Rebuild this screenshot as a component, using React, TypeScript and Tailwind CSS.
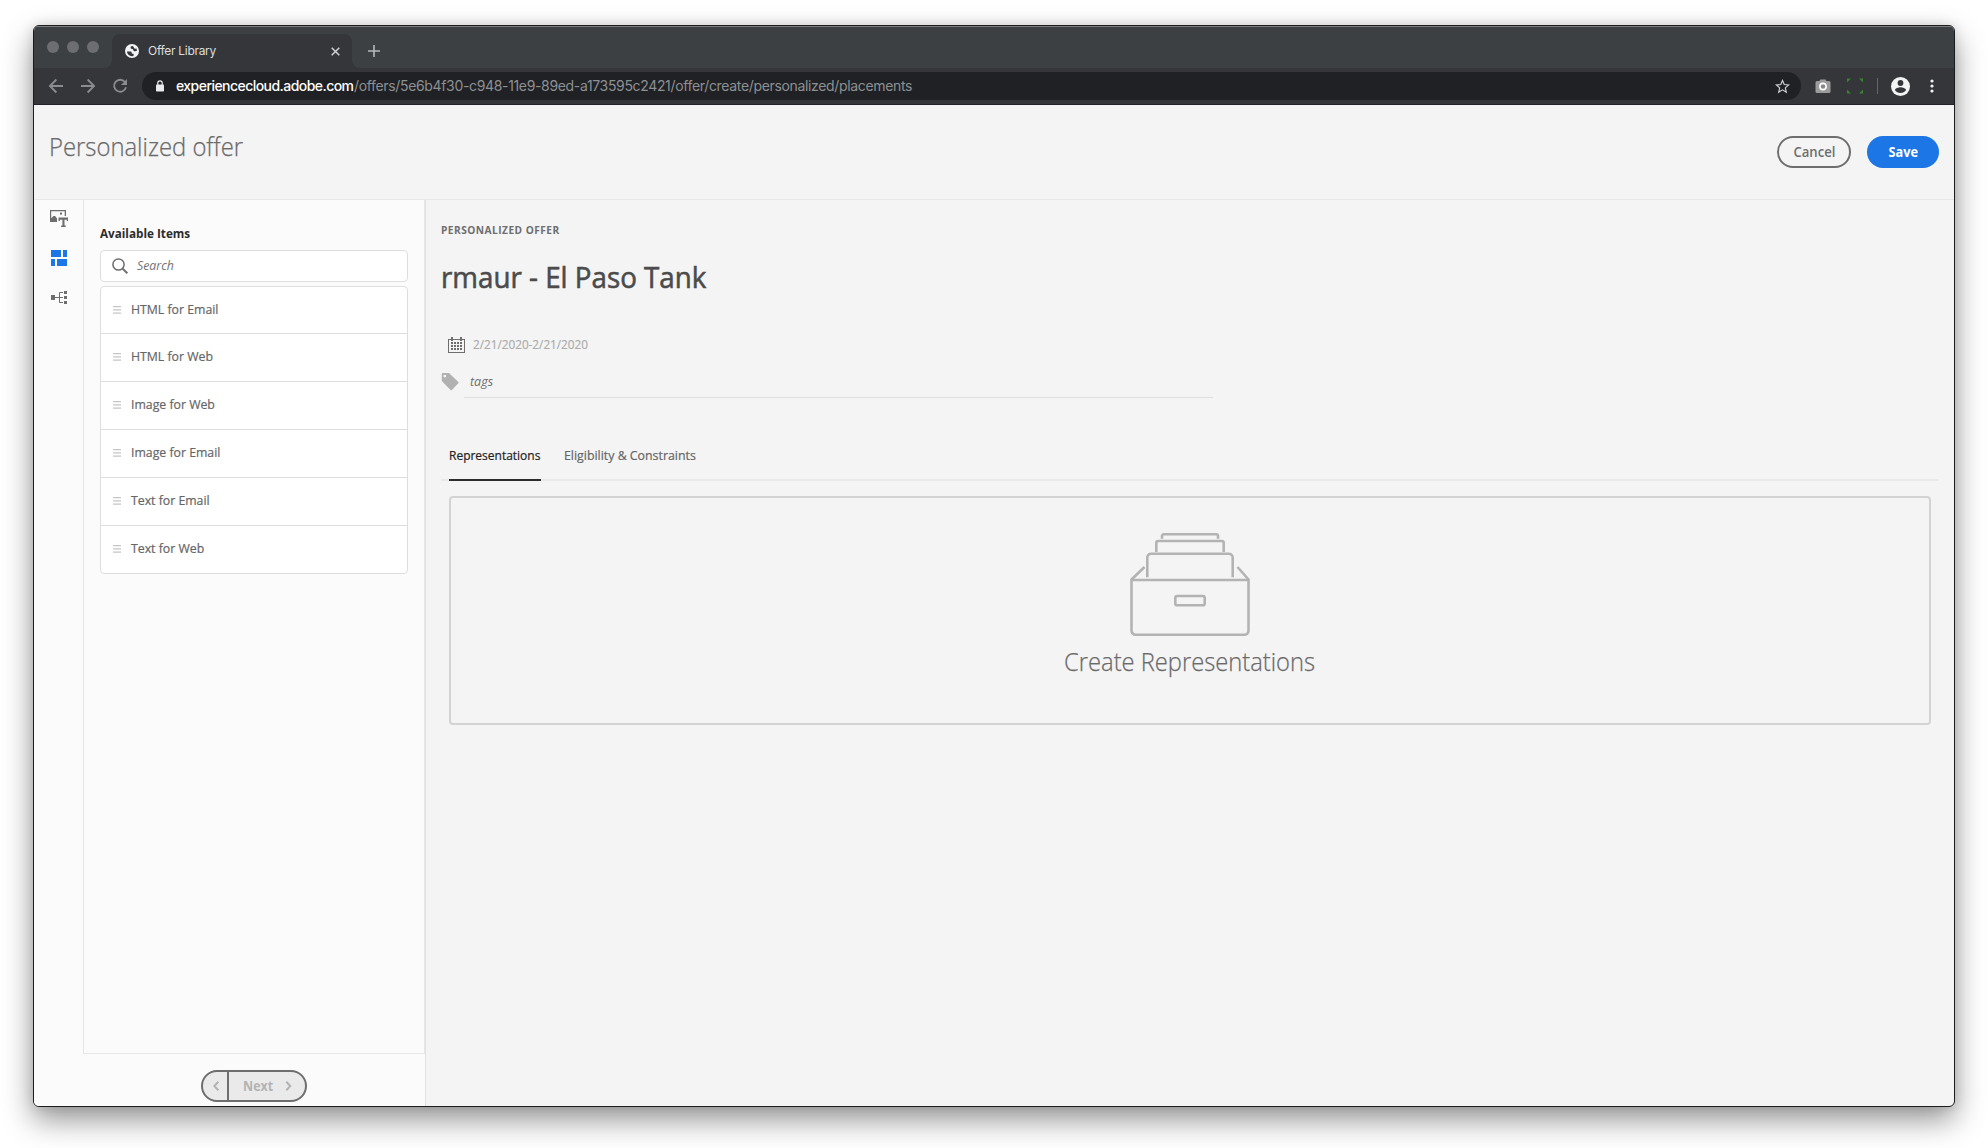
import type { ReactNode } from "react";

const placements = [
  "HTML for Email",
  "HTML for Web",
  "Image for Web",
  "Image for Email",
  "Text for Email",
  "Text for Web",
];

function Narrow({ children, className = "" }: { children: ReactNode; className?: string }) {
  return (
    <span className={`inline-block origin-left whitespace-nowrap ${className}`}>{children}</span>
  );
}

function TabStrip() {
  return (
    <div className="flex h-[42px] items-end border-t border-[#7d8082] bg-[#3c4043]">
      <div className="flex h-full w-[70px] items-start gap-2 pt-[14px] pl-[13px]">
        <span className="size-3 shrink-0 rounded-full bg-[#6c6e71]" />
        <span className="size-3 shrink-0 rounded-full bg-[#6c6e71]" />
        <span className="size-3 shrink-0 rounded-full bg-[#6c6e71]" />
      </div>
      <svg className="h-2 w-2 shrink-0" viewBox="0 0 8 8">
        <path d="M8 0v8H0a8 8 0 0 0 8-8z" fill="#35363a" />
      </svg>
      <div className="flex h-[34px] w-[240px] shrink-0 items-center rounded-t-lg bg-[#35363a] pl-[13px]">
        <svg className="size-[14px] shrink-0" viewBox="0 0 14 14">
          <circle cx="7" cy="7" r="7" fill="#f1f3f4" />
          <path
            d="M1.900 7.600h3.600c.9 0 1.100.5 1.100 1.200 0 .8.500 1 1.300 1 .7 0 .8.500.8 1.100 0 .8-.8 1.300-1.700 1.300-2.800 0-4.900-2-5.100-4.600zM7.200 1.900c-1 .2-1.600.9-1.600 1.700 0 .9.500 1.300 1.400 1.300 1 0 1.200.4 1.300 1.200.1.900.6 1.200 1.500 1.200.8 0 1-.6 2.300-.6-.1-1-.4-1.800-.9-2.500-.5.600-1.100.7-1.700.4-.8-.4-.5-1.300-1-1.900-.3-.4-.7-.7-1.300-.8z"
            fill="#35363a"
          />
        </svg>
        <span className="ml-[9px] w-[183px] shrink-0 font-['Inter',sans-serif] text-[12px] leading-4 tracking-[-0.3px] text-[#dcddde]">
          Offer Library
        </span>
        <svg className="size-[9px] shrink-0" viewBox="0 0 9 9" stroke="#d0d2d4" strokeWidth="1.500">
          <path d="M.7.7l7.600 7.600M8.300.7L.7 8.300" />
        </svg>
      </div>
      <svg className="h-2 w-2 shrink-0" viewBox="0 0 8 8">
        <path d="M0 0v8h8a8 8 0 0 1-8-8z" fill="#35363a" />
      </svg>
      <svg className="mb-[11px] ml-2 size-3" viewBox="0 0 12 12" stroke="#b6b9bb" strokeWidth="1.600">
        <path d="M6 0v12M0 6h12" />
      </svg>
    </div>
  );
}

function Toolbar() {
  return (
    <div className="flex h-[37px] items-center border-b border-[#252227] bg-[#35363a] pl-[14px]">
      <svg className="size-4" viewBox="0 0 16 16" fill="none" stroke="#8b8c8f" strokeWidth="1.800">
        <path d="M15 8H2.200M8.400 1.500L1.900 8l6.500 6.500" />
      </svg>
      <svg className="ml-4 size-4" viewBox="0 0 16 16" fill="none" stroke="#8b8c8f" strokeWidth="1.800">
        <path d="M1 8h12.800M7.600 1.500L14.100 8l-6.500 6.500" />
      </svg>
      <svg className="ml-4 size-4" viewBox="0 0 16 16" fill="none" stroke="#8b8c8f" strokeWidth="1.800">
        <path d="M12.900 4A6 6 0 1 0 14 9.300" />
        <path d="M15 1v6H9z" fill="#8b8c8f" stroke="none" />
      </svg>
      <div className="ml-[14px] flex h-7 w-[1659px] shrink-0 items-center rounded-full bg-[#202124] pr-[11px] pl-[14px]">
        <svg className="h-[12px] w-[8px]" viewBox="0 0 8 12">
          <rect y="4.500" width="8" height="7" rx=".8" fill="#e8eaed" />
          <path d="M1.800 5V3a2.200 2.200 0 0 1 4.400 0v2" fill="none" stroke="#e8eaed" strokeWidth="1.200" />
        </svg>
        <div className="ml-3 flex-1 font-['Inter',sans-serif] text-[14px] leading-5 whitespace-nowrap">
          <span className="inline-block w-[178px] font-medium tracking-[-0.55px] text-white">
            experiencecloud.adobe.com
          </span>
          <span className="tracking-[-0.340px] text-[#8d9093]">
            /offers/5e6b4f30-c948-11e9-89ed-a173595c2421/offer/create/personalized/placements
          </span>
        </div>
        <svg className="size-[15px]" viewBox="0 0 15 15" fill="none" stroke="#cdcfd1" strokeWidth="1.200">
          <path d="M7.500 1.500l1.750 4.050 4.400.4-3.330 2.900 1 4.300L7.500 10.850l-3.820 2.300 1-4.300-3.330-2.900 4.400-.4z" />
        </svg>
      </div>
      <svg className="ml-[14px] h-[14px] w-4" viewBox="0 0 16 14">
        <path d="M2 2h2.500l.8-1.500h5.400L11.500 2H14a1.500 1.500 0 0 1 1.500 1.500v9A1.500 1.500 0 0 1 14 14H2a1.500 1.500 0 0 1-1.500-1.500v-9A1.500 1.500 0 0 1 2 2z" fill="#9b9b9b" />
        <circle cx="8" cy="7.500" r="3.100" fill="#8a8a8a" stroke="#fff" strokeWidth="1.600" />
      </svg>
      <svg className="ml-4 size-4" viewBox="0 0 16 16" fill="#37842f">
        <path d="M0 .5h4L0 4.500zM16 .5h-4l4 4zM0 15.500h4l-4-4zM16 15.500h-4l4-4z" />
      </svg>
      <span className="ml-[14px] h-4 w-px bg-[#66676a]" />
      <svg className="ml-[13px] size-[19px]" viewBox="0 0 19 19">
        <circle cx="9.500" cy="9.500" r="9.500" fill="#f1f3f4" />
        <circle cx="9.500" cy="6" r="2.900" fill="#35363a" />
        <path d="M3.900 13.100c0-1.900 3.700-2.900 5.600-2.900s5.600 1 5.600 2.900a6.700 6.700 0 0 1-11.200 0z" fill="#35363a" />
      </svg>
      <svg className="ml-[20px] h-[14px] w-[4px]" viewBox="0 0 4 14" fill="#f1f3f4">
        <circle cx="2" cy="2" r="1.600" />
        <circle cx="2" cy="7" r="1.600" />
        <circle cx="2" cy="12" r="1.600" />
      </svg>
    </div>
  );
}

function PageHeader() {
  return (
    <header className="flex h-[95px] items-start border-b border-[#e8e8e8] pr-[15px] pl-[14px]">
      <h1 className="flex-1 pt-[25px] pl-px text-[26px] leading-8 font-light text-[#6a6a6a] [-webkit-text-stroke:0.25px_#6a6a6a]">
        <Narrow className="scale-x-[0.917]">Personalized offer</Narrow>
      </h1>
      <button className="mt-[31px] flex h-8 w-[74px] items-center justify-center rounded-full border-2 border-[#6e6e6e] pb-[2px] text-[14px] font-semibold text-[#6e6e6e]">
        <span className="inline-block scale-x-[0.937]">Cancel</span>
      </button>
      <button className="mt-[31px] ml-4 flex h-8 w-[72px] items-center justify-center rounded-full bg-[#1c76e6] pb-[2px] text-[14px] font-bold text-white">
        <span className="inline-block scale-x-[0.91]">Save</span>
      </button>
    </header>
  );
}

function Rail() {
  return (
    <nav className="flex w-[49px] shrink-0 flex-col items-center pt-[10px] pl-px">
      <svg className="h-[18px] w-[18px]" viewBox="0 0 18 18" fill="#6e6e6e">
        <path d="M0 0h16v6h-1.300V1.200H1.200v7L3.500 6l1.600 0L7 8.500V12H0z" />
        <rect x="10" y="2.600" width="2" height="2" />
        <path d="M8.500 7.500H18V11h-1.200V9.700h-2.300v5.800h1.200v1.600h-4.600v-1.600h1.300V9.700H9.800V11H8.500z" />
      </svg>
      <svg className="mt-[22px] size-4" viewBox="0 0 16 16" fill="#1c76e6">
        <path d="M0 0h10v7H0zM12 0h4v7h-4zM0 9h4v7H0zM6 9h10v7H6z" />
      </svg>
      <svg className="mt-6 size-4" viewBox="0 0 16 16" fill="#6e6e6e">
        <path d="M0 5h4v5H0zM13 1h3v3h-3zM13 6h3v3h-3zM13 11h3v3h-3z" />
        <path d="M4 7.500h5M12 2.500H8.500v10H12M8.500 7.500H12" fill="none" stroke="#6e6e6e" strokeWidth="1" />
      </svg>
    </nav>
  );
}

function Panel() {
  return (
    <section className="h-[854px] w-[342px] border-x border-b border-[#e6e6e6] pt-[23px] pr-[16px] pl-4">
      <h2 className="text-[13px] leading-5 font-bold text-[#2c2c2c]">
        <Narrow className="scale-x-[0.9]">Available Items</Narrow>
      </h2>
      <div className="mt-[7px] flex h-8 items-center rounded border border-[#dedede] bg-white pl-[11px]">
        <svg className="size-4" viewBox="0 0 16 16" fill="none" stroke="#6e6e6e">
          <circle cx="6.500" cy="6.500" r="5.600" strokeWidth="1.500" />
          <path d="M10.600 10.600l4.700 4.700" strokeWidth="2" />
        </svg>
        <span className="ml-[9px] text-[13px] leading-5 text-[#747474] italic">
          <Narrow className="-translate-y-px scale-x-[0.95]">Search</Narrow>
        </span>
      </div>
      <ul className="mt-[4px] overflow-hidden rounded border border-[#dedede] bg-white">
        {placements.map((name) => (
          <li
            key={name}
            className="flex h-12 items-center border-b border-[#dedede] pb-px pl-3 first:h-[47px] last:h-[47px] last:border-b-0"
          >
            <svg className="h-2 w-2" viewBox="0 0 8 8" fill="#c6c6c6">
              <path d="M0 0h8v1.300H0zM0 3.200h8v1.300H0zM0 6.500h8v1.300H0z" />
            </svg>
            <span className="ml-[10px] text-[13px] leading-5 text-[#666] [-webkit-text-stroke:0.2px_#666]">
              <Narrow className="-translate-y-px scale-x-[0.945]">{name}</Narrow>
            </span>
          </li>
        ))}
      </ul>
    </section>
  );
}

function Sidebar() {
  return (
    <aside className="flex w-[392px] shrink-0 border-r border-[#e1e1e1] bg-[#fbfbfb]">
      <Rail />
      <div className="flex flex-col">
        <Panel />
        <div className="mt-4 ml-[118px] flex h-8 w-[106px] rounded-full border-2 border-[#6e6e6e] bg-[#eaeaea] text-[#b3b3b3]">
          <button className="flex w-[26px] items-center justify-center border-r-2 border-[#6e6e6e] pl-[2px]">
            <svg className="h-[10px] w-[6px]" viewBox="0 0 6 10" fill="none" stroke="#b3b3b3" strokeWidth="2">
              <path d="M5.300.7L1.300 5l4 4.300" />
            </svg>
          </button>
          <button className="flex flex-1 items-center pl-[14px] text-[14px] font-bold">
            <span className="flex w-[42px] shrink-0 text-left">
              <Narrow className="-translate-y-px scale-x-[0.89]">Next</Narrow>
            </span>
            <svg className="h-[10px] w-[7px]" viewBox="0 0 7 10" fill="none" stroke="#b3b3b3" strokeWidth="2">
              <path d="M1.300.7l4 4.300-4 4.300" />
            </svg>
          </button>
        </div>
      </div>
    </aside>
  );
}

function CalendarIcon() {
  return (
    <svg className="h-[17px] w-[17px]" viewBox="0 0 17 17" fill="#6e6e6e">
      <path d="M0 2h17v14H0zM1 3v12h15V3z" fillRule="evenodd" />
      <path d="M3 0h2v4H3zM12 0h2v4h-2z" />
      <path d="M3 5h2v2H3zM6 5h2v2H6zM9 5h2v2H9zM12 5h2v2h-2zM3 8h2v2H3zM6 8h2v2H6zM9 8h2v2H9zM12 8h2v2h-2zM3 11h2v2H3zM6 11h2v2H6zM9 11h2v2H9zM12 11h2v2h-2z" />
    </svg>
  );
}

function DrawerArt() {
  return (
    <svg className="h-[104px] w-[120px]" viewBox="0 0 120 104" fill="none" stroke="#b3b3b3" strokeWidth="2.600">
      <path d="M1.500 47h117v50.500a4.200 4.200 0 0 1-4.200 4.200H5.700a4.200 4.200 0 0 1-4.200-4.200z" />
      <path d="M1.500 46.500L14.500 34M118.500 46.500L107.500 34" />
      <path d="M17.300 44.300V24.500a3.800 3.800 0 0 1 3.800-3.800h77.800a3.800 3.800 0 0 1 3.800 3.800v19.800" />
      <path d="M26.300 19V10a2 2 0 0 1 2-2h63.400a2 2 0 0 1 2 2v9" />
      <path d="M32 5.700V3a1.700 1.700 0 0 1 1.700-1.700h52.600A1.700 1.700 0 0 1 88 3v2.700" />
      <rect x="45.300" y="63" width="29.400" height="9.300" rx="1.800" />
    </svg>
  );
}

function OfferEditor() {
  return (
    <main className="flex-1 pl-[15px]">
      <p className="pt-[20px] text-[11px] leading-5 font-bold text-[#6e6e6e]">
        <Narrow className="scale-x-[0.925] tracking-[0.5px]">PERSONALIZED OFFER</Narrow>
      </p>
      <h2 className="mt-[17px] text-[30px] leading-10 text-[#4b4b4b] [-webkit-text-stroke:0.6px_#4b4b4b]">
        <Narrow className="scale-x-[0.925]">rmaur - El Paso Tank</Narrow>
      </h2>
      <div className="mt-[38px] flex h-5 items-center pl-[7px]">
        <CalendarIcon />
        <span className="ml-[8px] text-[13px] leading-5 text-[#acacac] [-webkit-text-stroke:0.2px_#acacac]">
          <Narrow className="-translate-y-px scale-x-[0.903]">2/21/2020-2/21/2020</Narrow>
        </span>
      </div>
      <div className="mt-[11px] flex h-[32px] w-[772px] items-start">
        <svg className="mt-[7px] size-[18px] shrink-0" viewBox="0 0 18 18">
          <path
            d="M1.700 0H8l9.300 9a.9.900 0 0 1 0 1.300l-6.400 6.600a.9.900 0 0 1-1.300 0L.8 8V1A1 1 0 0 1 1.700 0zm2.100 1.700a1.400 1.400 0 1 0 0 2.800 1.400 1.400 0 0 0 0-2.800z"
            fill="#b1b1b1"
            fillRule="evenodd"
          />
        </svg>
        <div className="ml-[5px] h-full flex-1 border-b border-[#dedede] pt-[5px] pl-[6px] text-[13px] leading-5 text-[#6e6e6e] italic">
          <Narrow className="scale-x-[0.959]">tags</Narrow>
        </div>
      </div>
      <div className="mt-[38px] mr-[15px] flex h-[45px] gap-6 border-b-2 border-[#e9e9e9] pl-2 text-[13px] leading-5">
        <div className="-mb-[2px] h-[45px] w-[92px] border-b-2 border-[#2c2c2c] pt-[9px] text-[#222] [-webkit-text-stroke:0.2px_#222]">
          <Narrow className="scale-x-[0.922]">Representations</Narrow>
        </div>
        <div className="-ml-px pt-[9px] text-[#666] [-webkit-text-stroke:0.2px_#666]">
          <Narrow className="scale-x-[0.950]">Eligibility &amp; Constraints</Narrow>
        </div>
      </div>
      <div className="mt-[15px] mr-[23px] ml-2 flex h-[229px] flex-col items-center rounded border-2 border-[#d3d3d3] pt-[35px]">
        <DrawerArt />
        <p className="mt-[6px] text-[26px] leading-9 font-light text-[#6a6a6a] [-webkit-text-stroke:0.25px_#6a6a6a]">
          <span className="inline-block scale-x-[0.912] whitespace-nowrap">Create Representations</span>
        </p>
      </div>
    </main>
  );
}

export default function App() {
  return (
    <div className="h-[1148px] w-[1988px] overflow-hidden bg-white pt-[25px] pl-[33px] font-['Open_Sans','Noto_Sans',sans-serif]">
      <div className="flex h-[1082px] w-[1922px] flex-col overflow-hidden rounded-[6px] border border-[#1b1c1d] bg-[#f4f4f4] shadow-[0_13px_30px_rgba(0,0,0,0.42),0_0_12px_rgba(0,0,0,0.12)]">
        <TabStrip />
        <Toolbar />
        <PageHeader />
        <div className="flex min-h-0 flex-1">
          <Sidebar />
          <OfferEditor />
        </div>
      </div>
    </div>
  );
}
